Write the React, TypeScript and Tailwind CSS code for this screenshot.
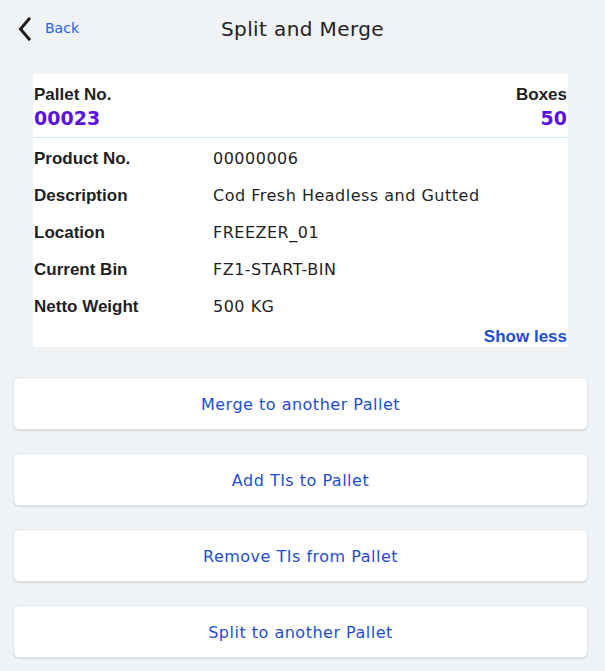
import React from 'react';

const details: { label: string; value: string }[] = [
  { label: 'Product No.', value: '00000006' },
  { label: 'Description', value: 'Cod Fresh Headless and Gutted' },
  { label: 'Location', value: 'FREEZER_01' },
  { label: 'Current Bin', value: 'FZ1-START-BIN' },
  { label: 'Netto Weight', value: '500 KG' },
];

const actions = [
  'Merge to another Pallet',
  'Add TIs to Pallet',
  'Remove TIs from Pallet',
  'Split to another Pallet',
];

const wide = "font-['DejaVu_Sans',sans-serif]";
const bold = "font-['Liberation_Sans',Arial,sans-serif] font-bold";
const number = "font-['DejaVu_Sans',sans-serif] font-bold text-[19px] leading-[26px] text-[#5b13e0]";

export default function App() {
  return (
    <div className="min-h-[671px] w-[605px] bg-[#f0f3f6] text-[#1f1f1f]">
      {/* Header */}
      <div className="relative flex h-[57px] items-center px-[18px]">
        <button className="flex items-center gap-[14px]">
          <svg width="13" height="24" viewBox="0 0 13 24" fill="none">
            <path d="M11 2 L2.5 12 L11 22" stroke="#1f1f1f" strokeWidth="3" strokeLinecap="square" />
          </svg>
          <span className={`${wide} text-[14px] text-[#2563eb]`}>Back</span>
        </button>
        <h1 className={`${wide} pointer-events-none absolute left-0 right-0 top-[14px] text-center text-[20px] tracking-[0.4px] text-[#222]`}>
          Split and Merge
        </h1>
      </div>

      {/* Pallet card */}
      <div className="mx-[33px] mt-[17px] w-[535px] bg-white">
        <div className="flex justify-between px-[1px] pt-[11px] pb-[6px]">
          <div>
            <div className={`${bold} text-[17px] leading-[20px]`}>Pallet No.</div>
            <div className={number}>00023</div>
          </div>
          <div className="text-right">
            <div className={`${bold} text-[17px] leading-[20px]`}>Boxes</div>
            <div className={number}>50</div>
          </div>
        </div>
        <div className="mx-[1px] h-px bg-[#cfe4fa]" />
        <div className="flex flex-col px-[1px] pt-[2px]">
          {details.map((d) => (
            <div key={d.label} className="flex h-[37px] items-center">
              <span className={`${bold} w-[179px] text-[17px]`}>{d.label}</span>
              <span className={`${wide} text-[16px] tracking-[0.5px]`}>{d.value}</span>
            </div>
          ))}
        </div>
        <div className="flex justify-end px-[1px] pt-[2px]">
          <button className={`${bold} text-[17px] leading-[20px] text-[#1d4ed8]`}>Show less</button>
        </div>
      </div>

      {/* Actions */}
      <div className="mt-[30px] flex flex-col gap-[23px] pl-[13px] pr-[17px] pb-[12px]">
        {actions.map((a) => (
          <button
            key={a}
            className={`${wide} h-[53px] w-full rounded-[6px] border border-[#e3e6ea] bg-white pt-[3px] text-[16px] tracking-[0.5px] text-[#1d4ed8] shadow-[0_1px_1px_rgba(0,0,0,0.12)]`}
          >
            {a}
          </button>
        ))}
      </div>
    </div>
  );
}
